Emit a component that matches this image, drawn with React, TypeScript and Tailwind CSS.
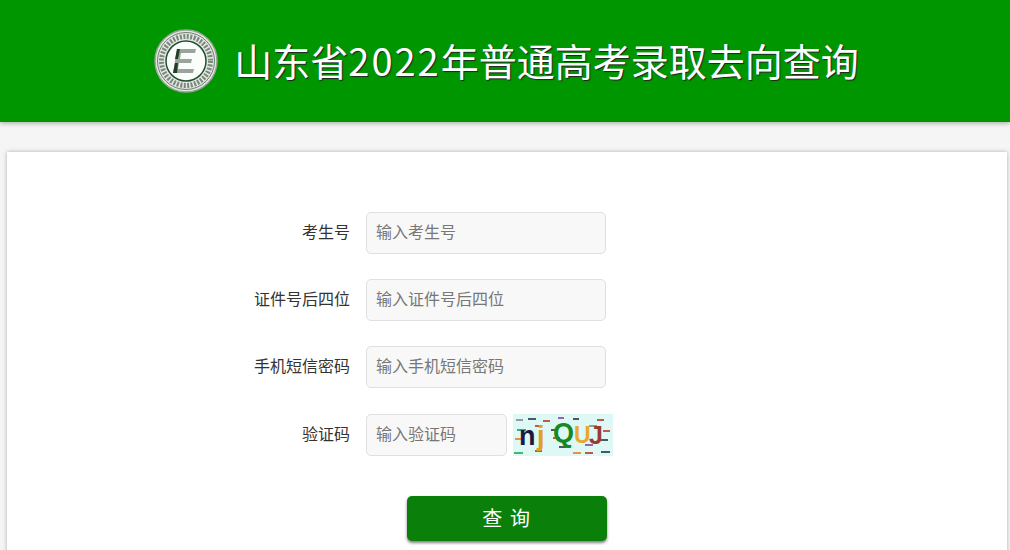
const font = { fontFamily: '"Noto Sans CJK SC", "Liberation Sans", sans-serif' };

const noise = [
  [3, 5, 7, "#7f8c8d"], [15, 4, 8, "#2c3e50"], [30, 6, 7, "#c0392b"], [45, 3, 6, "#8e44ad"], [60, 4, 6, "#2c3e50"], [84, 5, 7, "#c0392b"],
  [4, 15, 9, "#16a085"], [22, 11, 6, "#c0392b"], [38, 15, 6, "#2c3e50"], [76, 11, 8, "#7f8c8d"], [90, 16, 7, "#c0392b"],
  [2, 24, 6, "#e67e22"], [40, 23, 7, "#c0392b"], [86, 25, 9, "#2c3e50"], [72, 30, 8, "#8e44ad"],
  [1, 38, 9, "#27ae60"], [22, 36, 7, "#c0392b"], [46, 32, 7, "#2c3e50"], [60, 38, 8, "#e67e22"], [72, 38, 8, "#c0392b"], [88, 37, 9, "#2c3e50"],
];

function Captcha() {
  return (
    <svg width="100" height="42" viewBox="0 0 100 42" className="ml-[6px] shrink-0">
      <rect width="100" height="42" fill="#def8f6" />
      {noise.map(([x, y, w, c], i) => (
        <rect key={i} x={x as number} y={y as number} width={w as number} height="2" fill={c as string} opacity="0.85" />
      ))}
      <g fontFamily='"Liberation Sans", sans-serif' fontWeight="700" fontSize="27">
        <text x="6" y="31" fill="#1c1c3a">n</text>
        <text x="24" y="31" fill="#e0a020">j</text>
        <text x="40" y="28" fill="#148a20">Q</text>
        <text x="61" y="29" fill="#e8a82c" fontSize="23">U</text>
        <text x="76" y="30" fill="#9a3c30" fontSize="25">J</text>
      </g>
    </svg>
  );
}

function Logo() {
  return (
    <svg width="64" height="64" viewBox="0 0 64 64" className="shrink-0">
      <circle cx="32" cy="32" r="31" fill="#e4e8e4" stroke="#98a598" strokeWidth="1.5" />
      <circle cx="32" cy="32" r="28.5" fill="none" stroke="#6f7f6f" strokeWidth="1" />
      <circle cx="32" cy="32" r="24.5" fill="none" stroke="#4f5f4f" strokeWidth="5" strokeDasharray="2 1.5" opacity="0.7" />
      <circle cx="32" cy="32" r="20" fill="#fbfdfb" stroke="#1f4f2f" strokeWidth="1.5" />
      <path d="M23 20h19l-1 4H27l-1 6h12l-1 4H25l-1 6h16l-1 4H19z" fill="#9aa49b" />
      <path d="M23 20h3l-2 10h-3zM21 34h3l-1 10h-4z" fill="#1f3f27" />
    </svg>
  );
}

function Row({ label, placeholder, captcha }: { label: string; placeholder: string; captcha?: boolean }) {
  return (
    <div className="flex items-center">
      <label className="w-[343px] -translate-y-[2px] text-right text-base text-[#333]">{label}</label>
      <div className="ml-4 flex items-center">
        <input
          placeholder={placeholder}
          className={`h-[42px] rounded-[5px] border border-[#e0e0e0] bg-[#f8f8f8] pr-[10px] pl-[9px] pb-[5px] text-base placeholder:text-[#777] ${
            captcha ? "w-[141px]" : "w-[240px]"
          }`}
          style={font}
        />
        {captcha && <Captcha />}
      </div>
    </div>
  );
}

export default function App() {
  return (
    <div className="h-[550px] overflow-hidden bg-[#f5f5f5]" style={font}>
      <header className="flex h-[122px] items-center justify-center gap-4 bg-[#009600] pl-[3px] shadow-[0_1px_5px_rgba(0,0,0,0.35)]">
        <Logo />
        <h1 className="-translate-y-px text-[38px] font-normal leading-none whitespace-nowrap text-white [text-shadow:1px_1px_1px_#222]">
          山东省<span className="tracking-[2px]">2022</span>年普通高考录取去向查询
        </h1>
      </header>
      <main className="ml-[7px] mt-[30px] h-[500px] w-[1000px] bg-white pt-[60px] shadow-[0_0_4px_rgba(0,0,0,0.3)]">
        <div className="flex flex-col gap-[25px]">
          <Row label="考生号" placeholder="输入考生号" />
          <Row label="证件号后四位" placeholder="输入证件号后四位" />
          <Row label="手机短信密码" placeholder="输入手机短信密码" />
          <div className="pt-px">
            <Row label="验证码" placeholder="输入验证码" captcha />
          </div>
        </div>
        <div className="mt-10 flex pl-[400px]">
          <button
            type="button"
            className="h-[45px] w-[200px] rounded-[5px] bg-[#0a800a] pb-px text-xl tracking-[1.75px] text-white shadow-[0_2px_3px_rgba(0,0,0,0.5)]"
          >
            查 询
          </button>
        </div>
      </main>
    </div>
  );
}
